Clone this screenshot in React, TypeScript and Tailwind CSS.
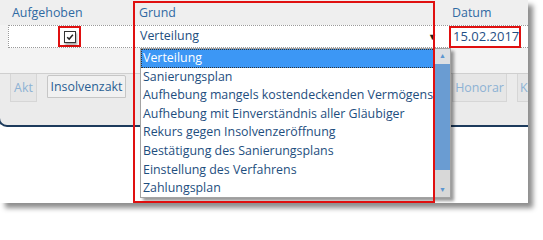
const reasons = [
  "Verteilung",
  "Sanierungsplan",
  "Aufhebung mangels kostendeckenden Vermögens",
  "Aufhebung mit Einverständnis aller Gläubiger",
  "Rekurs gegen Insolvenzeröffnung",
  "Bestätigung des Sanierungsplans",
  "Einstellung des Verfahrens",
  "Zahlungsplan",
];

export default function App() {
  return (
    <div className="h-[218px] w-[543px] bg-white font-['Open_Sans',sans-serif] text-[12.4px]">
      <div className="relative h-[203px] w-[528px] overflow-hidden bg-white shadow-[5px_5px_5px_rgba(0,0,0,0.45)]">
        {/* header */}
        <div className="flex h-[25px] items-center bg-[#efefef] pt-[2px] text-[#2f6aa3]">
          <div className="w-[134px] pl-[12px]">Aufgehoben</div>
          <div className="w-[315px] pl-[5px]">Grund</div>
          <div className="pl-[3px]">Datum</div>
        </div>

        {/* row */}
        <div className="bg-[#f3f3f3] pl-[8px]">
          <div className="flex h-[23px] border-y border-l border-dotted border-[#9a9a9a] bg-white text-[#1e4e7e]">
            <div className="w-[125px] pl-[49px]">
              <div className="flex h-[21px] w-[23px] items-center justify-center border-2 border-[#e01010]">
                <span className="flex h-[12px] w-[12px] items-center justify-center border border-[#333] bg-white shadow-[1px_2px_2px_rgba(0,0,0,0.35)]">
                  <svg viewBox="0 0 10 10" className="h-[8px] w-[8px]">
                    <path d="M1.5 5.2 L4 7.6 L8.6 2.2" fill="none" stroke="#222" strokeWidth="1.8" />
                  </svg>
                </span>
              </div>
            </div>
            <div className="flex w-[315px] items-center justify-between pl-[6px] pr-[12px]">
              <span>Verteilung</span>
              <span className="text-[9px] text-[#222]">▼</span>
            </div>
            <div className="flex-1">
              <div className="flex h-[22px] w-[72px] items-center border-2 border-[#e01010] pl-[2px] text-[13px] text-[#1f4f86]">
                15.02.2017
              </div>
            </div>
          </div>
        </div>
        <div className="h-[25px] bg-[#f3f3f3]" />

        {/* tab strip */}
        <div className="-ml-[2px] h-[54px] rounded-bl-[9px] border-b-2 border-l-2 border-t border-[#1d3b5c] border-t-[#cfcfcf] bg-[#ebebeb]">
          <div className="flex items-start pl-[10px]">
            <div className="flex h-[28px] w-[27px] shrink-0 justify-center border-x border-b border-[#d6d6d6] bg-[#e6e6e6] pt-[5px] text-[#8db2d4]">
              Akt
            </div>
            <div className="ml-[10px] mt-[1px] flex h-[23px] w-[79px] shrink-0 justify-center rounded-t-[2px] border border-[#c6c6c6] bg-[#f1f1f1] pt-[2px] text-[#2a5f93]">
              Insolvenzakt
            </div>
            <div className="ml-[326px] flex h-[28px] w-[55px] shrink-0 justify-center border-x border-b border-[#d6d6d6] bg-[#e6e6e6] pt-[5px] text-[#8db2d4]">
              Honorar
            </div>
            <div className="ml-[10px] flex h-[28px] w-[30px] shrink-0 border-x border-b border-[#d6d6d6] bg-[#e6e6e6] pl-[2px] pt-[5px] text-[#8db2d4]">
              K
            </div>
          </div>
        </div>

        {/* open dropdown */}
        <div className="absolute left-[140px] top-[48px] flex h-[150px] w-[311px] border border-[#a3a3a3] bg-white shadow-[3px_3px_3px_rgba(0,0,0,0.4)]">
          <ul className="flex-1 text-[#1e4e7e]">
            {reasons.map((r, i) => (
              <li
                key={r}
                className={
                  i === 0
                    ? "flex h-[18.6px] items-center border border-dotted border-[#333] bg-[#3c97f5] pl-[1px] text-white"
                    : "flex h-[18.6px] items-center whitespace-nowrap pl-[2px]"
                }
              >
                {r}
              </li>
            ))}
          </ul>
          <div className="flex w-[15px] flex-col bg-[#d8d8d8]">
            <div className="flex h-[15px] items-center justify-center bg-[#dcdfe3] text-[7px] text-[#5b95d0]">▲</div>
            <div className="h-[106px] bg-[#6a9cd2]" />
            <div className="flex-1" />
            <div className="flex h-[14px] items-center justify-center text-[7px] text-[#5b95d0]">▼</div>
          </div>
        </div>

        {/* annotation */}
        <div className="pointer-events-none absolute left-[133px] top-[1px] h-[202px] w-[302px] border-2 border-[#e01010]" />
      </div>
    </div>
  );
}
